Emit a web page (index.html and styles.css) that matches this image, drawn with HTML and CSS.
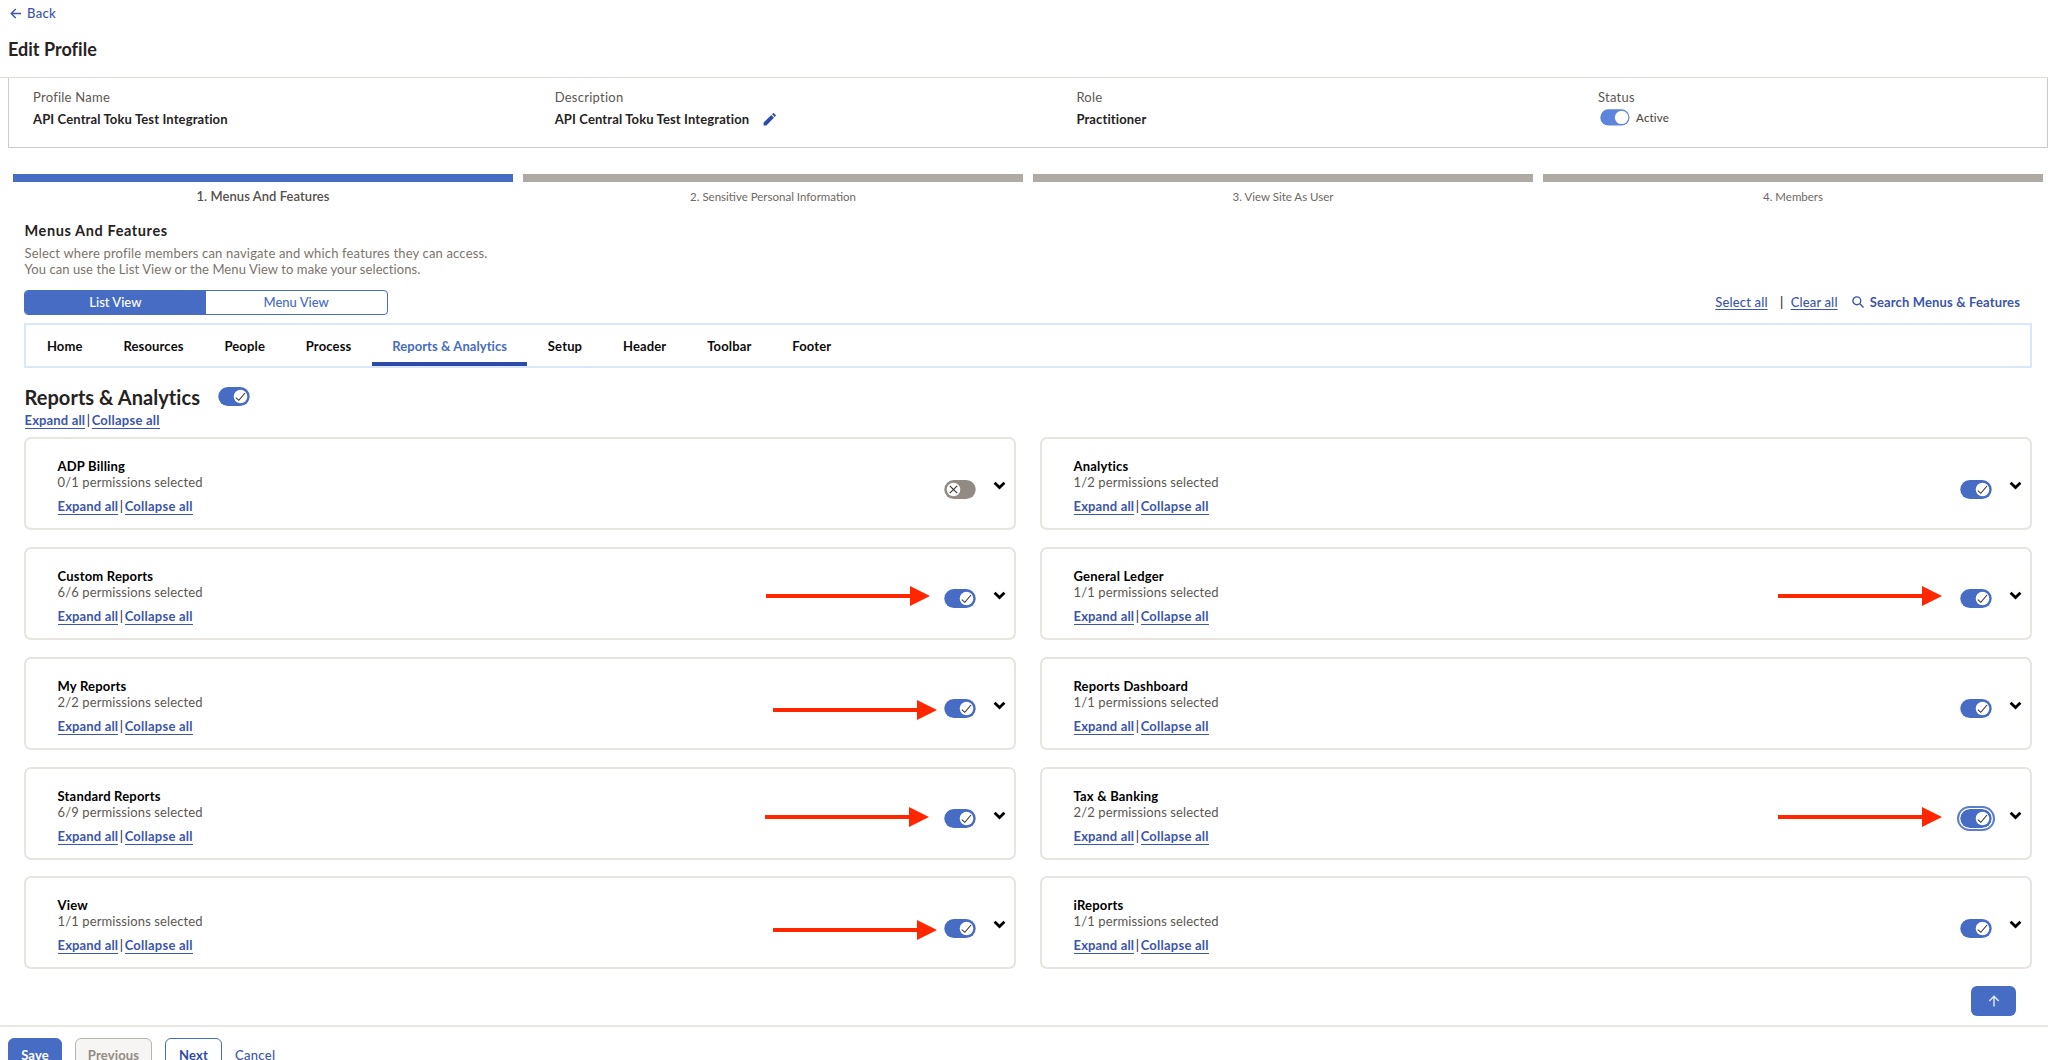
FILE: index.html
```html
<!DOCTYPE html>
<html lang="en">
<head>
<meta charset="utf-8">
<title>Edit Profile</title>
<link rel="stylesheet" href="styles.css">
</head>
<body>
<svg class="defs" aria-hidden="true">
  <symbol id="on" viewBox="0 0 32 19">
    <rect x="0.3" y="0" width="31.4" height="19" rx="9.5" fill="#476cc4"/>
    <circle cx="22.5" cy="9.5" r="6.8" fill="#fff"/>
    <path d="M17.8 10.6l3 2.7 6.2-7.3" fill="none" stroke="#3a3733" stroke-width="1.1"/>
  </symbol>
  <symbol id="off" viewBox="0 0 32 19">
    <rect x="0.3" y="0" width="31.4" height="19" rx="9.5" fill="#928b84"/>
    <circle cx="9.5" cy="9.5" r="6.8" fill="#fff"/>
    <path d="M5.8 5.8l7.4 7.4M13.2 5.8l-7.4 7.4" fill="none" stroke="#3a3733" stroke-width="1.2"/>
  </symbol>
  <symbol id="chevron" viewBox="0 0 13 9">
    <path d="M1.6 1.8l4.9 4.7 4.9-4.7" fill="none" stroke="#000" stroke-width="2.8"/>
  </symbol>
  <symbol id="arrow" viewBox="0 0 164 20">
    <path d="M0 8h144V0l20 10-20 10v-8H0z" fill="#ff2600"/>
  </symbol>
</svg>

<header class="page-header">
  <a class="back">
    <svg width="12" height="11" viewBox="0 0 12 11"><path d="M11 5.5H1.5M5.7 1L1.2 5.5l4.5 4.5" fill="none" stroke="#3c55ae" stroke-width="1.4"/></svg>
    Back
  </a>
  <h1>Edit Profile</h1>
</header>

<section class="profile">
  <div class="field"><span class="label">Profile Name</span><span class="value">API Central Toku Test Integration</span></div>
  <div class="field"><span class="label">Description</span><span class="value">API Central Toku Test Integration
    <svg class="pencil" width="13" height="13" viewBox="0 0 13 13"><path d="M.6 12.4V9.6L8.3 2l2.7 2.7-7.6 7.7zM9.1 1.2l.9-.9c.3-.3.7-.3 1 0l1.7 1.7c.3.3.3.7 0 1l-.9.9z" fill="#2f4ba8"/></svg></span></div>
  <div class="field"><span class="label">Role</span><span class="value">Practitioner</span></div>
  <div class="field"><span class="label">Status</span>
    <span class="status"><svg width="30" height="17" viewBox="0 0 30 17"><rect x=".3" y=".3" width="29.2" height="16.2" rx="8.1" fill="#5d85dc"/><circle cx="21.6" cy="8.4" r="6.7" fill="#fff"/></svg>Active</span></div>
</section>

<nav class="steps">
  <div class="step current">1. Menus And Features</div>
  <div class="step">2. Sensitive Personal Information</div>
  <div class="step">3. View Site As User</div>
  <div class="step">4. Members</div>
</nav>

<main>
  <h2>Menus And Features</h2>
  <p class="intro">Select where profile members can navigate and which features they can access.<br><span class="second">You can use the List View or the Menu View to make your selections.</span></p>

  <div class="toolbar">
    <div class="views"><span class="view active">List View</span><span class="view">Menu View</span></div>
    <div class="tools">
      <a class="plain">Select all</a><span class="bar">|</span><a class="plain">Clear all</a>
      <a class="search"><svg width="12" height="12" viewBox="0 0 12 12"><g fill="none" stroke="#3c55ae" stroke-width="1.4"><circle cx="4.8" cy="4.8" r="3.9"/><path d="M7.6 7.6l3.9 3.9"/></g></svg>Search Menus &amp; Features</a>
    </div>
  </div>

  <nav class="tabs">
    <a>Home</a><a>Resources</a><a>People</a><a>Process</a><a class="selected">Reports &amp; Analytics</a><a>Setup</a><a>Header</a><a>Toolbar</a><a>Footer</a>
  </nav>

  <div class="group-title"><h3>Reports &amp; Analytics</h3><svg class="toggle"><use href="#on"/></svg></div>
  <div class="links"><a>Expand all</a><span>|</span><a>Collapse all</a></div>

  <div class="cards">
    <article class="card">
      <div class="info"><h4>ADP Billing</h4><p>0/1 permissions selected</p><div class="links"><a>Expand all</a><span>|</span><a>Collapse all</a></div></div>
      <svg class="toggle"><use href="#off"/></svg><svg class="chevron"><use href="#chevron"/></svg>
    </article>
    <article class="card">
      <div class="info"><h4>Analytics</h4><p>1/2 permissions selected</p><div class="links"><a>Expand all</a><span>|</span><a>Collapse all</a></div></div>
      <svg class="toggle"><use href="#on"/></svg><svg class="chevron"><use href="#chevron"/></svg>
    </article>
    <article class="card">
      <div class="info"><h4>Custom Reports</h4><p>6/6 permissions selected</p><div class="links"><a>Expand all</a><span>|</span><a>Collapse all</a></div></div>
      <svg class="toggle"><use href="#on"/></svg><svg class="chevron"><use href="#chevron"/></svg>
    </article>
    <article class="card">
      <div class="info"><h4>General Ledger</h4><p>1/1 permissions selected</p><div class="links"><a>Expand all</a><span>|</span><a>Collapse all</a></div></div>
      <svg class="toggle"><use href="#on"/></svg><svg class="chevron"><use href="#chevron"/></svg>
    </article>
    <article class="card">
      <div class="info"><h4>My Reports</h4><p>2/2 permissions selected</p><div class="links"><a>Expand all</a><span>|</span><a>Collapse all</a></div></div>
      <svg class="toggle"><use href="#on"/></svg><svg class="chevron"><use href="#chevron"/></svg>
    </article>
    <article class="card">
      <div class="info"><h4>Reports Dashboard</h4><p>1/1 permissions selected</p><div class="links"><a>Expand all</a><span>|</span><a>Collapse all</a></div></div>
      <svg class="toggle"><use href="#on"/></svg><svg class="chevron"><use href="#chevron"/></svg>
    </article>
    <article class="card">
      <div class="info"><h4>Standard Reports</h4><p>6/9 permissions selected</p><div class="links"><a>Expand all</a><span>|</span><a>Collapse all</a></div></div>
      <svg class="toggle"><use href="#on"/></svg><svg class="chevron"><use href="#chevron"/></svg>
    </article>
    <article class="card">
      <div class="info"><h4>Tax &amp; Banking</h4><p>2/2 permissions selected</p><div class="links"><a>Expand all</a><span>|</span><a>Collapse all</a></div></div>
      <svg class="toggle focused"><use href="#on"/></svg><svg class="chevron"><use href="#chevron"/></svg>
    </article>
    <article class="card">
      <div class="info"><h4>View</h4><p>1/1 permissions selected</p><div class="links"><a>Expand all</a><span>|</span><a>Collapse all</a></div></div>
      <svg class="toggle"><use href="#on"/></svg><svg class="chevron"><use href="#chevron"/></svg>
    </article>
    <article class="card">
      <div class="info"><h4>iReports</h4><p>1/1 permissions selected</p><div class="links"><a>Expand all</a><span>|</span><a>Collapse all</a></div></div>
      <svg class="toggle"><use href="#on"/></svg><svg class="chevron"><use href="#chevron"/></svg>
    </article>
  </div>

  <button class="to-top"><svg width="12" height="12" viewBox="0 0 12 12"><path d="M6 11.5V1.6M1.3 6L6 1.3 10.7 6" fill="none" stroke="#e4eafa" stroke-width="1.4"/></svg></button>
</main>

<footer>
  <button class="btn save">Save</button>
  <button class="btn previous">Previous</button>
  <button class="btn next">Next</button>
  <a class="cancel">Cancel</a>
</footer>

<svg class="arrow custom"><use href="#arrow"/></svg>
<svg class="arrow my"><use href="#arrow"/></svg>
<svg class="arrow standard"><use href="#arrow"/></svg>
<svg class="arrow view-row"><use href="#arrow"/></svg>
<svg class="arrow ledger"><use href="#arrow"/></svg>
<svg class="arrow tax"><use href="#arrow"/></svg>
</body>
</html>
```
FILE: styles.css
```css
* { box-sizing: border-box; }

body {
  position: relative;
  display: flex;
  flex-direction: column;
  width: 2048px;
  height: 1060px;
  margin: 0;
  overflow: hidden;
  background: #fff;
  color: #26231f;
  font: 400 13px/16px Lato, "Open Sans", sans-serif;
  letter-spacing: 0.15px;
}

h1, h2, h3, h4, p { margin: 0; font-weight: 600; }
svg { display: block; flex: none; }
.defs { position: absolute; width: 0; height: 0; }

/* Header */
.page-header {
  flex: none;
  height: 78px;
  padding: 5px 8px 0;
  border-bottom: 1px solid #dedad6;
}
.back {
  display: flex;
  align-items: center;
  gap: 5px;
  padding-left: 2px;
  color: #3c55ae;
  font-weight: 500;
  letter-spacing: 0.35px;
}
h1 {
  margin-top: 16px;
  font-size: 18px;
  font-weight: 700;
  line-height: 24px;
  letter-spacing: 0.02px;
}

/* Profile summary */
.profile {
  display: grid;
  flex: none;
  grid-template-columns: repeat(4, 521.7px);
  height: 70px;
  margin-left: 8px;
  padding: 11px 0 0 24px;
  overflow: hidden;
  border: solid #cdcbc9;
  border-width: 0 1px 1px;
}
.field { display: flex; flex-direction: column; gap: 6px; }
.label { color: #5c5751; letter-spacing: 0.25px; }
.value {
  display: flex;
  gap: 14px;
  align-items: center;
  font-weight: 700;
  letter-spacing: 0.13px;
}
.status {
  display: flex;
  gap: 6px;
  align-items: center;
  margin-top: -2px;
  padding-left: 2px;
  color: #4e4a45;
  font-size: 11.5px;
  font-weight: 500;
}

/* Step progress */
.steps {
  display: grid;
  flex: none;
  grid-template-columns: repeat(4, 500px);
  gap: 10px;
  margin: 26px 0 0 13px;
}
.step {
  padding-top: 6px;
  border-top: 8px solid #b0aaa5;
  color: #6e6862;
  font-size: 11.5px;
  line-height: 17px;
  letter-spacing: 0;
  text-align: center;
}
.step.current {
  border-color: #476cc4;
  color: #55504a;
  font-size: 13px;
  font-weight: 600;
  letter-spacing: 0.05px;
}

main {
  display: flex;
  flex: none;
  flex-direction: column;
  height: 820px;
  padding: 16px 16px 0 24px;
}
h2 {
  margin-left: 0.5px;
  font-size: 14.5px;
  font-weight: 700;
  line-height: 19px;
  letter-spacing: 0.6px;
}
.intro {
  margin: 5px 0 0 0.5px;
  color: #7b746c;
  font-weight: 400;
  letter-spacing: 0.17px;
}
.second { letter-spacing: 0.08px; }

.toolbar {
  display: flex;
  justify-content: space-between;
  align-items: flex-start;
  margin-top: 13px;
  padding-right: 12px;
}
.views {
  display: flex;
  width: 363.5px;
  height: 25px;
  overflow: hidden;
  border: 1px solid #476cc4;
  border-radius: 4px;
}
.view {
  flex: 1;
  color: #476cc4;
  font-weight: 500;
  line-height: 22px;
  letter-spacing: 0;
  text-align: center;
}
.view.active { background: #476cc4; color: #fff; }
.tools {
  display: flex;
  align-items: center;
  margin-top: 3.5px;
  color: #3c55ae;
  font-weight: 500;
}
.plain { text-decoration: underline; text-underline-offset: 2px; }
.bar { width: 23px; padding-left: 5px; color: #26231f; text-align: center; }
.search {
  display: flex;
  gap: 6px;
  align-items: center;
  margin-left: 14px;
  font-weight: 700;
}

/* Section tabs */
.tabs {
  display: flex;
  height: 45px;
  margin-top: 8px;
  padding-left: 0.5px;
  border: 2px solid #dae6fa;
}
.tabs a {
  padding: 0 20.4px;
  border-bottom: 4px solid transparent;
  color: #0d0c0b;
  font-weight: 700;
  line-height: 43px;
}
.tabs .selected { border-color: #2f4ba8; color: #476cc4; letter-spacing: 0.07px; }

.group-title { display: flex; gap: 18px; align-items: flex-start; height: 44px; padding-top: 20px; }
h3 {
  margin: -4px 0 0 0.5px;
  font-size: 20px;
  font-weight: 700;
  line-height: 26px;
  letter-spacing: 0.04px;
}
.toggle { width: 32px; height: 19px; }
.group-title .toggle { margin-top: -1px; }
.focused {
  border-radius: 10px;
  outline: 2px solid #5d7ece;
  outline-offset: 1.5px;
}
.links { display: flex; gap: 1px; height: 18px; color: #26231f; }
.links a {
  height: 17px;
  border-bottom: 1px solid #3c55ae;
  color: #3c55ae;
  font-weight: 700;
}
.links a:last-child { letter-spacing: 0.24px; }
.links span { width: 4.5px; padding-left: 0.5px; }
main > .links { padding-left: 0.5px; }

/* Permission cards */
.cards {
  display: grid;
  grid-template-columns: 991.5px 991.5px;
  grid-auto-rows: 93px;
  gap: 16.85px 24.5px;
  margin-top: 7px;
}
.card {
  display: flex;
  padding: 19px 7.5px 0 31.5px;
  border: 2px solid #e8e4e0;
  border-radius: 7px;
}
.info { flex: 1; }
.card h4 { color: #000; font-weight: 700; letter-spacing: 0.2px; }
.card p { color: #5c5751; font-weight: 400; letter-spacing: 0.12px; }
.card .links { margin-top: 8px; }
.card .toggle { margin-top: 21.5px; }
.chevron { width: 13px; height: 9px; margin: 23px 0 0 17px; }

.to-top {
  display: flex;
  justify-content: center;
  align-items: center;
  width: 45px;
  height: 30px;
  margin: 17px 16px 0 auto;
  padding: 0;
  border: 0;
  border-radius: 6px;
  background: #476cc4;
}

/* Footer actions */
footer {
  display: flex;
  flex: none;
  align-items: flex-start;
  height: 60px;
  padding: 11px 8px 0;
  border-top: 2px solid #eae7e3;
}
.btn {
  height: 34px;
  padding: 0;
  border: 1.5px solid #476cc4;
  border-radius: 6px;
  font: 700 13px/16px Lato, sans-serif;
  letter-spacing: 0.15px;
}
.save { width: 54px; background: #476cc4; color: #fff; }
.previous {
  width: 77px;
  margin-left: 13px;
  border-color: #b9b3ad;
  background: #f6f5f3;
  color: #928b84;
}
.next { width: 57px; margin-left: 13px; background: #fff; color: #2f4ba8; }
.cancel {
  margin: 9px 0 0 13px;
  color: #3c55ae;
  font-weight: 500;
  line-height: 16px;
  letter-spacing: 0.3px;
}

/* Annotation arrows drawn over the page */
.arrow { position: absolute; width: 164px; height: 20px; }
.custom { left: 766px; top: 586px; }
.my { left: 773px; top: 699.5px; }
.standard { left: 765px; top: 806.5px; }
.view-row { left: 773px; top: 920px; }
.ledger { left: 1778px; top: 586px; }
.tax { left: 1778px; top: 806.5px; }
```
